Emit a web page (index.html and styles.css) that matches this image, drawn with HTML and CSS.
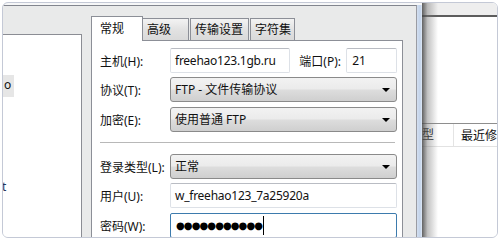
FILE: index.html
```html
<!DOCTYPE html>
<html lang="zh-CN">
<head>
<meta charset="utf-8">
<title>站点管理器</title>
<link rel="stylesheet" href="styles.css">
</head>
<body>
<div class="frame">
  <div class="dialog">
    <div class="leftpane">
      <div class="lp-sel">o</div>
      <div class="lp-t">t</div>
    </div>
    <div class="tabs-area">
      <div class="tabs">
        <div class="tab active">常规</div>
        <div class="tab first">高级</div>
        <div class="tab">传输设置</div>
        <div class="tab">字符集</div>
      </div>
      <div class="panel">
        <div class="row r-host">
          <span class="label">主机(H):</span>
          <div class="input host">freehao123.1gb.ru</div>
          <span class="label port-label">端口(P):</span>
          <div class="input port">21</div>
        </div>
        <div class="row r-proto">
          <span class="label">协议(T):</span>
          <div class="select">FTP - 文件传输协议<span class="arrow"></span></div>
        </div>
        <div class="row r-enc">
          <span class="label">加密(E):</span>
          <div class="select">使用普通 FTP<span class="arrow"></span></div>
        </div>
        <div class="sep"></div>
        <div class="row r-login">
          <span class="label">登录类型(L):</span>
          <div class="select">正常<span class="arrow"></span></div>
        </div>
        <div class="row r-user">
          <span class="label">用户(U):</span>
          <div class="input wide">w_freehao123_7a25920a</div>
        </div>
        <div class="row r-pwd">
          <span class="label">密码(W):</span>
          <div class="input wide focus"><span class="dots">●●●●●●●●●●●</span><span class="caret"></span></div>
        </div>
      </div>
    </div>
  </div>
  <div class="bluestrip"></div>
  <div class="rightwin">
    <div class="rw-top"></div>
    <div class="rw-body">
      <div class="rw-header">
        <span class="col c1">型</span>
        <span class="col c2">最近修</span>
      </div>
    </div>
    <div class="shadow"></div>
  </div>
</div>
</body>
</html>
```
FILE: styles.css
```css
html, body {
  margin: 0;
  padding: 0;
  background: #ffffff;
}
body {
  width: 500px;
  height: 240px;
  overflow: hidden;
  font-family: "Noto Sans", "Noto Sans CJK SC", sans-serif;
  font-size: 12px;
  color: #111;
}
.frame {
  box-sizing: border-box;
  margin: 2px 0 0 2px;
  width: 496px;
  height: 236px;
  border: 1px solid #c4c9d6;
  border-radius: 6px;
  overflow: hidden;
  display: flex;
  background: #f6f7f8;
}
.dialog {
  margin-top: 2px;
  width: 414px;
  flex: none;
  box-sizing: border-box;
  border-top: 1px solid #82858e;
  border-right: 1px solid #9a9ca3;
  background: #e9eaea;
  display: flex;
  align-items: flex-start;
}
.leftpane {
  align-self: stretch;
  margin-top: 28px;
  width: 79px;
  box-sizing: border-box;
  flex: none;
  background: #fff;
  border-top: 1px solid #8b8d94;
  border-right: 1px solid #8b8d94;
  display: flex;
  flex-direction: column;
  align-items: flex-start;
}
.lp-sel {
  margin-top: 40px;
  width: 10px;
  height: 22px;
  line-height: 20px;
  background: #e6e6e6;
  padding-left: 1px;
  overflow: hidden;
}
.lp-t {
  margin-top: 83px;
  line-height: 14px;
  color: #23345a;
  margin-left: -1px;
}
.tabs-area {
  margin-left: 9px;
  margin-top: 10px;
  width: 312px;
  flex: none;
  align-self: stretch;
  display: flex;
  flex-direction: column;
}
.tabs {
  display: flex;
  align-items: flex-end;
  height: 24px;
}
.tab {
  box-sizing: border-box;
  height: 22px;
  border: 1px solid #8c8f97;
  border-bottom: none;
  background: linear-gradient(#f3f3f3, #e2e2e2 50%, #d9d9d9);
  padding: 3px 0 0 4px;
  line-height: 16px;
  margin-left: 1px;
}
.tab.first { margin-left: -1px; width: 47px; }
.tab:nth-child(3) { width: 59px; }
.tab:nth-child(4) { width: 45px; }
.tab.active {
  position: relative;
  z-index: 1;
  margin-left: 0;
  width: 52px;
  height: 25px;
  margin-bottom: -1px;
  background: #fff;
  padding: 4px 0 0 8px;
}
.panel {
  flex: 1;
  background: #fff;
  border: 1px solid #8c8f97;
  border-bottom: none;
  padding: 7px 5px 0 8px;
  display: flex;
  flex-direction: column;
}
.row {
  display: flex;
  align-items: center;
  height: 25px;
}
.r-proto { margin-top: 4px; }
.r-enc { margin-top: 5px; }
.r-login { margin-top: 11px; }
.r-user { margin-top: 4px; }
.r-pwd { margin-top: 5px; }
.label {
  width: 70px;
  flex: none;
  white-space: nowrap;
}
.port-label {
  width: 47px;
  margin-left: 9px;
}
.input {
  box-sizing: border-box;
  height: 25px;
  border: 1px solid #dde1e7;
  border-top-color: #b9bcc3;
  border-radius: 2px;
  padding-left: 4px;
  line-height: 23px;
  background: #fff;
  white-space: nowrap;
  overflow: hidden;
  letter-spacing: -0.25px;
}
.input.host { width: 121px; }
.input.port { width: 51px; padding-left: 5px; }
.input.wide { width: 227px; }
.input.focus {
  border-color: #3d7bad;
  display: flex;
  align-items: center;
  padding-left: 5px;
}
.dots {
  font-family: "DejaVu Sans", sans-serif;
  font-size: 10px;
  letter-spacing: -0.9px;
  color: #000;
}
.caret {
  width: 1px;
  height: 19px;
  background: #000;
  margin-left: 1px;
}
.select {
  box-sizing: border-box;
  position: relative;
  width: 227px;
  height: 25px;
  border: 1px solid #8a8a8a;
  border-radius: 3px;
  padding-left: 4px;
  line-height: 23px;
  background: linear-gradient(#f2f2f2 0%, #ebebeb 48%, #dddddd 52%, #cfcfcf 100%);
  display: flex;
  justify-content: space-between;
  align-items: center;
}
.arrow {
  width: 0;
  height: 0;
  border-left: 4px solid transparent;
  border-right: 4px solid transparent;
  border-top: 4px solid #000;
  margin-right: 6px;
}
.sep {
  margin-top: 10px;
  height: 1px;
  background: #b8b8b8;
  width: 295px;
}
.bluestrip {
  width: 5px;
  flex: none;
  margin-top: 2px;
  background: linear-gradient(90deg, #d3dff0, #c2d3ea 60%, #dfe8f5);
}
.rightwin {
  flex: 1;
  position: relative;
  display: flex;
  flex-direction: column;
  background: #fff;
}
.rw-top {
  height: 12px;
  background: #eeeeee;
  border-bottom: 2px solid #5d5d5d;
}
.rw-body {
  flex: 1;
  padding-top: 106px;
}
.rw-header {
  height: 22px;
  border-top: 1px solid #8e8e8e;
  border-bottom: 1px solid #e2e2e2;
  display: flex;
  align-items: center;
  white-space: nowrap;
  overflow: hidden;
}
.col.c1 {
  width: 32px;
  box-sizing: border-box;
  padding-left: 0;
  border-right: 1px solid #e4e4e4;
  height: 22px;
  line-height: 22px;
}
.col.c2 {
  padding-left: 7px;
}
.shadow {
  position: absolute;
  left: 0;
  top: 0;
  bottom: 0;
  width: 16px;
  background: linear-gradient(90deg, rgba(70,70,70,0.85), rgba(120,120,120,0.45) 35%, rgba(255,255,255,0));
}
```
